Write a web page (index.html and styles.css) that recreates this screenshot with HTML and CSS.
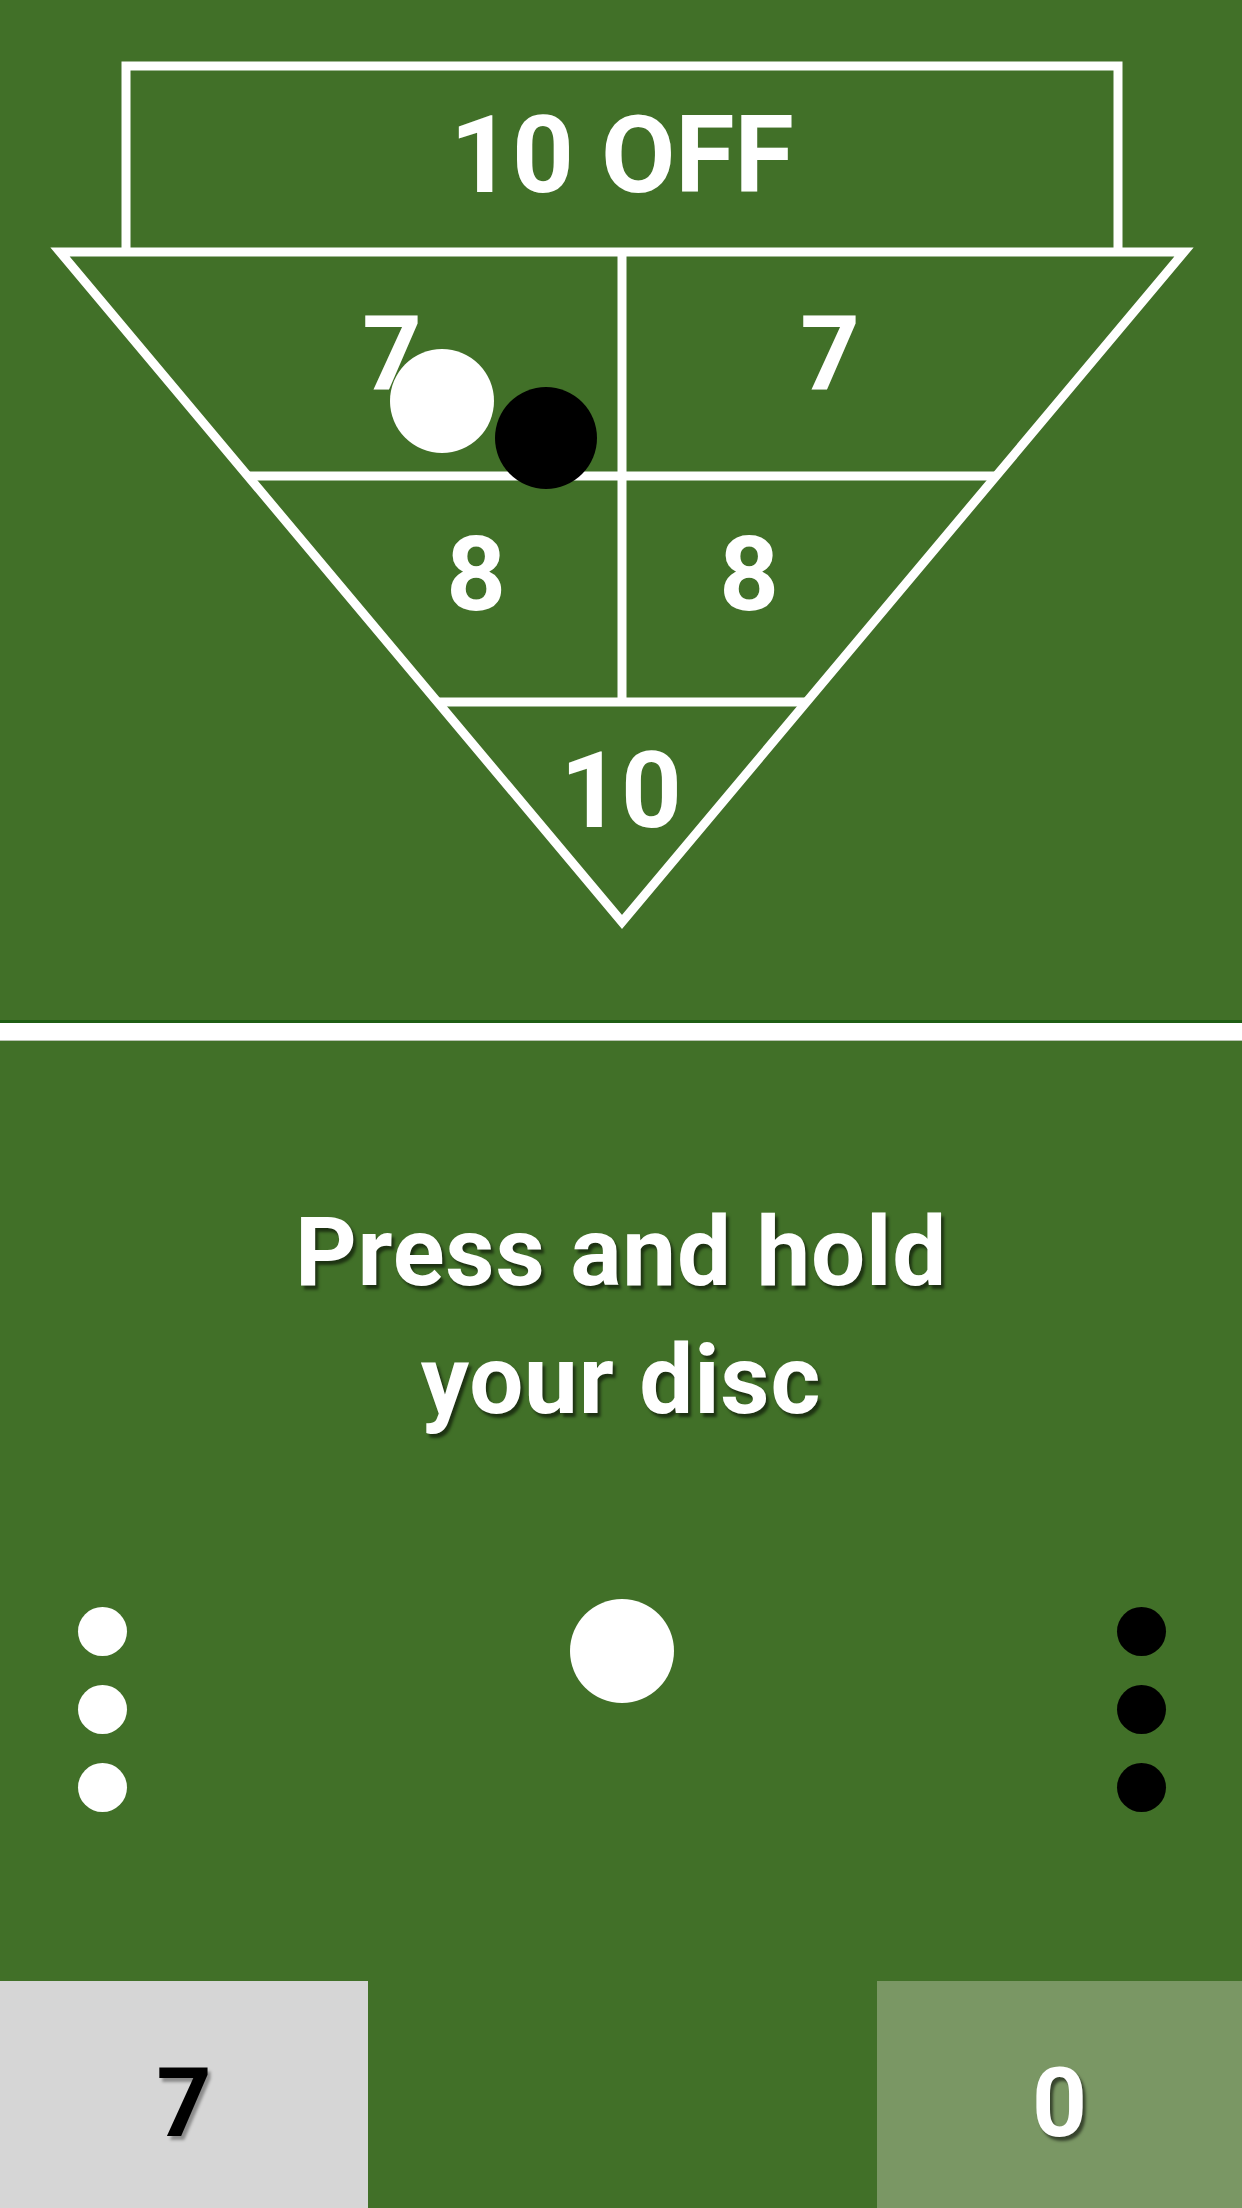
FILE: index.html
```html
<!DOCTYPE html>
<html lang="en">
<head>
<meta charset="utf-8">
<title>Shuffleboard</title>
<link rel="stylesheet" href="styles.css">
</head>
<body>
<div class="screen">
  <section class="board">
    <svg class="court" width="1242" height="1020" viewBox="0 0 1242 1020" xmlns="http://www.w3.org/2000/svg">
      <g fill="none" stroke="#ffffff" stroke-width="9" stroke-linejoin="miter" stroke-miterlimit="10">
        <path d="M126 252 V66 H1118 V252"/>
        <path d="M60 252 H1184 L622 922 Z"/>
        <path d="M622 252 V702"/>
        <path d="M248 476 H996"/>
        <path d="M437 702 H807"/>
      </g>
      <g class="zone-label" fill="#ffffff" text-anchor="middle">
        <text x="622" y="192" font-size="108">10 OFF</text>
        <text x="392" y="390" font-size="104">7</text>
        <text x="830" y="390" font-size="104">7</text>
        <text x="476" y="610" font-size="104">8</text>
        <text x="749" y="610" font-size="104">8</text>
        <text x="621" y="827" font-size="106">10</text>
      </g>
      <circle cx="442" cy="401" r="52" fill="#ffffff"/>
      <circle cx="546" cy="438" r="51" fill="#000000"/>
    </svg>
  </section>
  <div class="divider"></div>
  <section class="play">
    <p class="prompt">Press and hold<br>your disc</p>
    <div class="rack">
      <div class="stack">
        <span class="dot dot-white"></span>
        <span class="dot dot-white"></span>
        <span class="dot dot-white"></span>
      </div>
      <span class="puck"></span>
      <div class="stack">
        <span class="dot dot-black"></span>
        <span class="dot dot-black"></span>
        <span class="dot dot-black"></span>
      </div>
    </div>
    <div class="scores">
      <div class="score score-white">7</div>
      <div class="score score-black">0</div>
    </div>
  </section>
</div>
</body>
</html>
```

FILE: styles.css
```css
html, body {
  margin: 0;
  padding: 0;
}

body {
  width: 1242px;
  height: 2208px;
  background: #417028;
  font-family: Roboto, "Liberation Sans", sans-serif;
  overflow: hidden;
}

.screen {
  display: flex;
  flex-direction: column;
  width: 1242px;
  height: 2208px;
}

.board {
  height: 1020px;
  flex: none;
}

.court {
  display: block;
}

.zone-label {
  font-family: Roboto, "Liberation Sans", sans-serif;
  font-weight: 700;
}

.divider {
  flex: none;
  height: 17px;
  background: #ffffff;
  border-top: 3px solid #1f5e14;
  border-bottom: 1px solid #b9c4b2;
}

.play {
  flex: 1;
  display: flex;
  flex-direction: column;
  padding-top: 147px;
}

.prompt {
  margin: 0;
  text-align: center;
  color: #ffffff;
  font-weight: 700;
  font-size: 96px;
  line-height: 128px;
  letter-spacing: 0.8px;
  text-shadow: 3px 4px 3px rgba(0, 0, 0, 0.55);
}

.rack {
  margin-top: 155px;
  display: flex;
  justify-content: space-between;
  align-items: flex-start;
  padding: 0 76px 0 78px;
}

.stack {
  display: flex;
  flex-direction: column;
  gap: 29px;
  padding-top: 8px;
}

.dot {
  display: block;
  width: 49px;
  height: 49px;
  border-radius: 50%;
}

.dot-white {
  background: #ffffff;
}

.dot-black {
  background: #000000;
}

.puck {
  display: block;
  width: 104px;
  height: 104px;
  border-radius: 50%;
  background: #ffffff;
}

.scores {
  margin-top: auto;
  height: 227px;
  display: flex;
  justify-content: space-between;
}

.score {
  box-sizing: border-box;
  height: 227px;
  padding-top: 58px;
  text-align: center;
  font-weight: 700;
  font-size: 96px;
  line-height: 128px;
}

.score-white {
  width: 368px;
  background: #d6d6d6;
  color: #000000;
  text-shadow: 3px 4px 3px rgba(0, 0, 0, 0.35);
}

.score-black {
  width: 365px;
  background: #7a9764;
  color: #ffffff;
  text-shadow: 3px 4px 3px rgba(0, 0, 0, 0.55);
}
```
